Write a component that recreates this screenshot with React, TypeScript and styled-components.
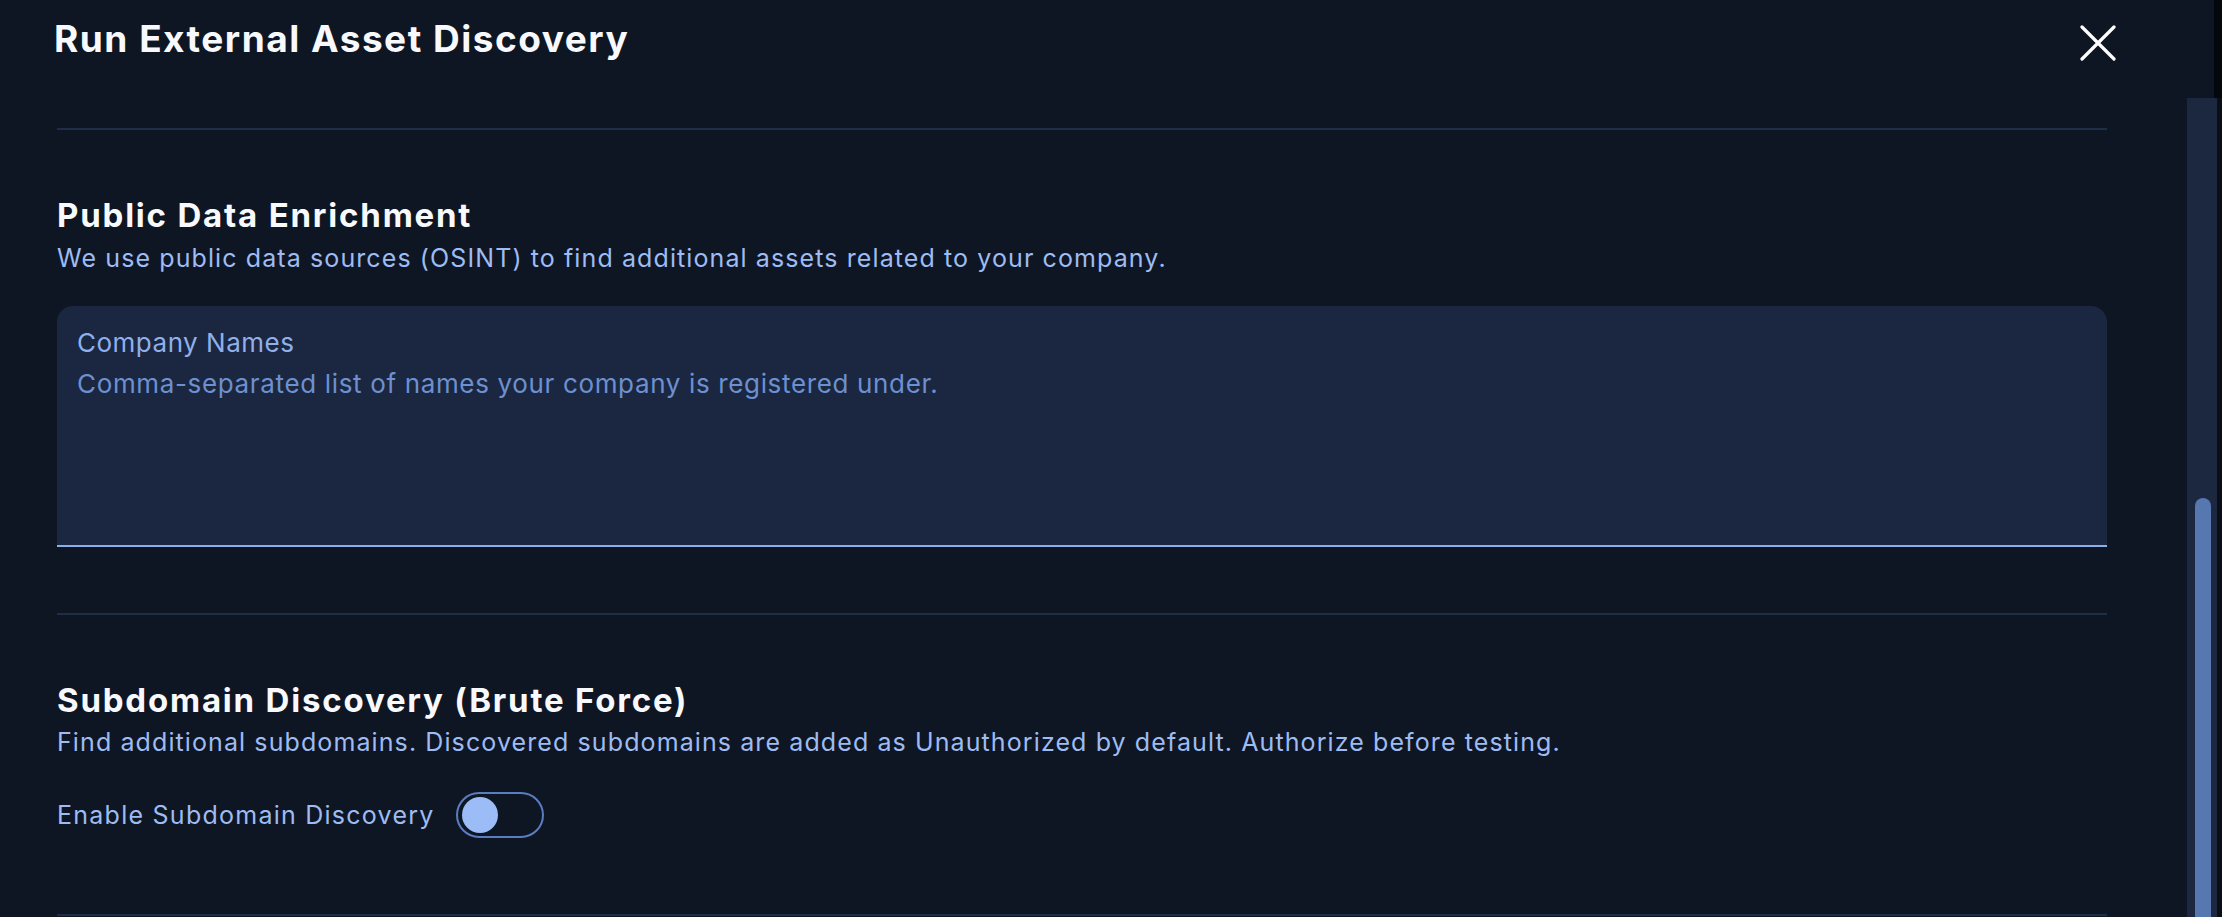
import React from 'react';
import styled, { createGlobalStyle } from 'styled-components';

const GlobalStyle = createGlobalStyle`
  html, body {
    margin: 0;
    padding: 0;
    background-color: #0f1623;
  }
  body {
    font-family: Inter, "Liberation Sans", sans-serif;
    overflow: hidden;
  }
`;

const Page = styled.div`
  width: 2222px;
  height: 917px;
  display: flex;
  flex-direction: column;
  background-color: #0f1623;
  overflow: hidden;
`;

const HeaderRow = styled.div`
  display: flex;
  height: 98px;
  flex-shrink: 0;
`;

const Header = styled.div`
  flex: 1;
  display: flex;
  justify-content: space-between;
  align-items: flex-start;
  padding: 17px 92px 0 54px;
`;

const Title = styled.h1`
  font-size: 37px;
  line-height: 1.2;
  font-weight: 700;
  letter-spacing: 1.5px;
  color: #f8f9fc;
  margin: 0;
`;

const CloseButton = styled.button`
  width: 48px;
  height: 48px;
  margin-top: 2px;
  display: flex;
  align-items: center;
  justify-content: center;
  background: none;
  border: none;
  padding: 0;
  cursor: pointer;
`;

const Edge = styled.div<{ width: number; shade: string }>`
  width: ${p => p.width}px;
  flex-shrink: 0;
  background-color: ${p => p.shade};
`;

const Body = styled.div`
  flex: 1;
  display: flex;
  min-height: 0;
`;

const Content = styled.div`
  flex: 1;
  padding: 30px 80px 0 57px;
  overflow: hidden;
`;

const ScrollTrack = styled.div`
  width: 30px;
  flex-shrink: 0;
  background-color: #1c2740;
  display: flex;
  flex-direction: column;
  padding: 400px 6px 0 8px;
  box-sizing: border-box;
`;

const ScrollThumb = styled.div`
  flex: 1;
  background-color: #5677b0;
  border-radius: 8px 8px 0 0;
`;

const Divider = styled.hr`
  border: none;
  height: 2px;
  background-color: #1e2d48;
  margin: 0;
`;

const Section = styled.section<{ bottom: number }>`
  padding: 68px 0 ${p => p.bottom}px;
`;

const SectionTitle = styled.h2`
  font-size: 33px;
  line-height: 1.2;
  font-weight: 700;
  letter-spacing: 1.8px;
  color: #f8f9fc;
  margin: -2px 0 4px 0;
`;

const SectionText = styled.p`
  font-size: 25px;
  line-height: 36px;
  letter-spacing: 1.1px;
  color: #9dbcf3;
  margin: 0;
`;

const Field = styled.label`
  display: flex;
  flex-direction: column;
  margin-top: 30px;
  padding: 24px 20px 0;
  background-color: #1b2740;
  border-radius: 16px 16px 0 0;
  border-bottom: 2px solid #8ab0ec;
  box-sizing: content-box;
  height: 215px;
`;

const FieldLabel = styled.span`
  font-size: 26px;
  line-height: 1;
  letter-spacing: 0.5px;
  color: #8fb0ea;
`;

const TextArea = styled.textarea`
  flex: 1;
  margin-top: 8px;
  padding: 0;
  background: transparent;
  border: none;
  outline: none;
  resize: none;
  font-family: Inter, "Liberation Sans", sans-serif;
  font-size: 26px;
  line-height: 1.5;
  letter-spacing: 0.65px;
  color: #e6edfb;

  &::placeholder {
    color: #6d90d0;
    opacity: 1;
  }
`;

const ToggleRow = styled.div`
  display: flex;
  align-items: center;
  gap: 21px;
  margin-top: 32px;
  margin-bottom: 10px;
`;

const ToggleLabel = styled.span`
  font-size: 25px;
  line-height: 36px;
  letter-spacing: 1.25px;
  color: #9dbcf3;
`;

const Switch = styled.button<{ on: boolean }>`
  width: 88px;
  height: 46px;
  box-sizing: border-box;
  border: 2px solid #5a7dbf;
  border-radius: 23px;
  background-color: ${p => (p.on ? '#5a7dbf' : 'transparent')};
  padding: 0 4px;
  display: flex;
  align-items: center;
  justify-content: ${p => (p.on ? 'flex-end' : 'flex-start')};
  cursor: pointer;
`;

const Knob = styled.span`
  width: 36px;
  height: 36px;
  border-radius: 50%;
  background-color: #9bbcf7;
`;

const App: React.FC = () => {
  const [subdomains, setSubdomains] = React.useState(false);

  return (
    <Page>
      <GlobalStyle />
      <HeaderRow>
        <Header>
          <Title>Run External Asset Discovery</Title>
          <CloseButton aria-label="Close">
            <svg width="36" height="36" viewBox="0 0 36 36" fill="none">
              <path d="M2 2 L34 34 M34 2 L2 34" stroke="#ffffff" strokeWidth="3.2" strokeLinecap="round" />
            </svg>
          </CloseButton>
        </Header>
        <Edge width={8} shade="#04070b" />
      </HeaderRow>

      <Body>
        <Content>
          <Divider />
          <Section bottom={66}>
            <SectionTitle>Public Data Enrichment</SectionTitle>
            <SectionText>We use public data sources (OSINT) to find additional assets related to your company.</SectionText>
            <Field>
              <FieldLabel>Company Names</FieldLabel>
              <TextArea placeholder="Comma-separated list of names your company is registered under." />
            </Field>
          </Section>
          <Divider />
          <Section bottom={66}>
            <SectionTitle>Subdomain Discovery (Brute Force)</SectionTitle>
            <SectionText>
              Find additional subdomains. Discovered subdomains are added as Unauthorized by default. Authorize before testing.
            </SectionText>
            <ToggleRow>
              <ToggleLabel>Enable Subdomain Discovery</ToggleLabel>
              <Switch on={subdomains} onClick={() => setSubdomains(!subdomains)} aria-label="Enable Subdomain Discovery">
                <Knob />
              </Switch>
            </ToggleRow>
          </Section>
          <Divider />
        </Content>
        <ScrollTrack>
          <ScrollThumb />
        </ScrollTrack>
        <Edge width={5} shade="#0a0e16" />
      </Body>
    </Page>
  );
};

export default App;
